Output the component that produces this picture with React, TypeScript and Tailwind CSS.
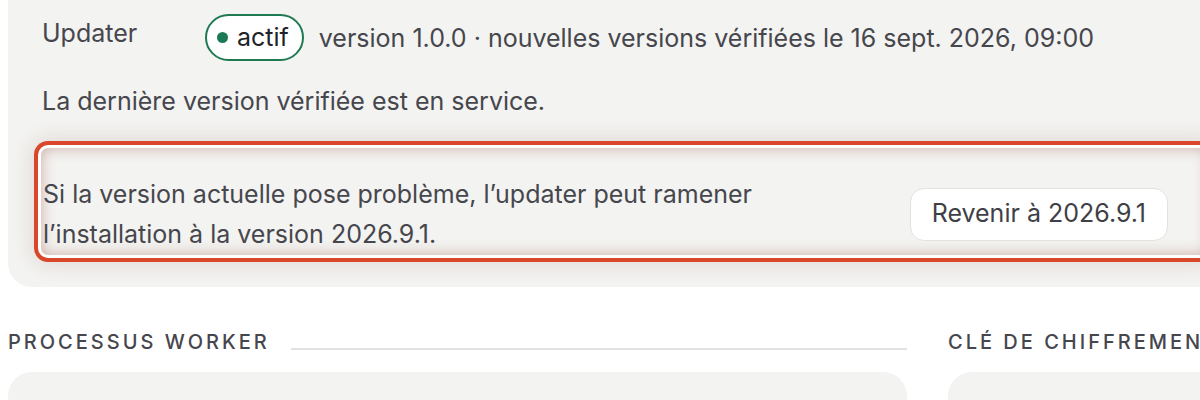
import React from "react";

export default function App() {
  return (
    <div
      className="relative h-[400px] w-[1200px] overflow-hidden bg-white text-[#46464d]"
      style={{ fontFamily: "Inter, 'Noto Sans', sans-serif" }}
    >
      <div className="ml-[8px] w-[1240px]">
        {/* Top card */}
        <div className="rounded-b-[24px] bg-[#f3f3f1] pb-[32px] pl-[33px]">
          <div className="flex items-start pt-[14px] pl-[1px]">
            <div className="mt-[1px] w-[163px] text-[25px] leading-[36px]">Updater</div>
            <div className="flex h-[47px] items-center">
              <span className="flex h-[47px] items-center gap-[9px] rounded-full border-2 border-[#1e7a52] bg-white pl-[10px] pr-[13px] text-[25px] text-[#1f2328]">
                <span className="h-[11px] w-[11px] rounded-full bg-[#1b7a55]" />
                actif
              </span>
              <span className="ml-[15px] text-[25px] leading-[36px]">
                version 1.0.0 · nouvelles versions vérifiées le 16 sept. 2026, 09:00
              </span>
            </div>
          </div>
          <div className="mt-[22px] pl-[1px] text-[25px] leading-[36px]">
            La dernière version vérifiée est en service.
          </div>
          <div className="mt-[29px] w-[1167px] rounded-[7px] bg-[#f3f3f1] pb-[1px] pl-[2px] pr-[40px] pt-[26px] shadow-[0_0_0_3px_#ffffff,0_0_0_7px_#d9472b,0_0_20px_9px_rgba(110,60,40,0.14),inset_0_0_14px_rgba(150,75,55,0.42)]">
            <div className="flex items-center justify-between">
              <div className="text-[25px] leading-[40px]">
                Si la version actuelle pose problème, l’updater peut ramener
                <br />
                l’installation à la version 2026.9.1.
              </div>
              <button className="h-[53px] rounded-[14px] border border-[#e4e2de] bg-white px-[21px] text-[25px] text-[#3f3f46]">
                Revenir à 2026.9.1
              </button>
            </div>
          </div>
        </div>

        {/* Sections */}
        <div className="mt-[41px] flex gap-[41px]">
          <div className="w-[899px] shrink-0">
            <div className="flex items-end gap-[21px]">
              <div className="text-[20px] font-medium uppercase leading-[28px] tracking-[0.15em]">
                Processus worker
              </div>
              <div className="mb-[6px] h-[2px] flex-1 bg-[#e2e2e0]" />
            </div>
            <div className="mt-[16px] h-[80px] rounded-[24px] bg-[#f3f3f1]" />
          </div>
          <div className="w-[400px] shrink-0">
            <div className="flex items-end gap-[21px]">
              <div className="whitespace-nowrap text-[20px] font-medium uppercase leading-[28px] tracking-[0.15em]">
                Clé de chiffrement
              </div>
            </div>
            <div className="mt-[16px] h-[80px] rounded-[24px] bg-[#f3f3f1]" />
          </div>
        </div>
      </div>
    </div>
  );
}
